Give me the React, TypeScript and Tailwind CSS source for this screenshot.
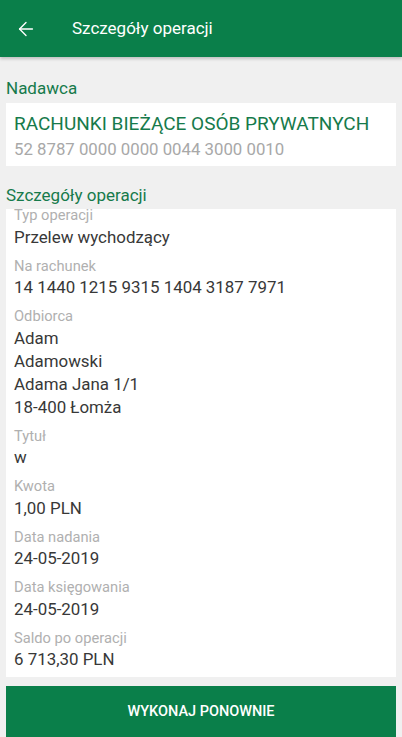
import { ArrowLeft } from "lucide-react";

const details = [
  { label: "Typ operacji", lines: ["Przelew wychodzący"] },
  { label: "Na rachunek", lines: ["14 1440 1215 9315 1404 3187 7971"] },
  { label: "Odbiorca", lines: ["Adam", "Adamowski", "Adama Jana 1/1", "18-400 Łomża"] },
  { label: "Tytuł", lines: ["w"] },
  { label: "Kwota", lines: ["1,00 PLN"] },
  { label: "Data nadania", lines: ["24-05-2019"] },
  { label: "Data księgowania", lines: ["24-05-2019"] },
  { label: "Saldo po operacji", lines: ["6 713,30 PLN"] },
];

export default function App() {
  return (
    <div
      className="w-[402px] h-[737px] bg-[#f0f0f0] flex flex-col overflow-hidden"
      style={{ fontFamily: "Roboto, 'Noto Sans', sans-serif" }}
    >
      {/* Toolbar */}
      <div className="h-[57px] shrink-0 bg-[#0a7f4a] flex items-center shadow-[0_2px_3px_rgba(0,0,0,0.2)] relative z-10">
        <ArrowLeft className="ml-[15px] w-[22px] h-[22px] text-white" strokeWidth={1.5} />
        <span className="ml-[35px] text-white text-[17px]">Szczegóły operacji</span>
      </div>

      <div className="px-[6px] flex-1 flex flex-col min-h-0">
        {/* Sender */}
        <div className="mt-[19px] h-[24px] leading-[24px] text-[#167a4b] text-[17px]">Nadawca</div>
        <div className="mt-[3px] bg-white px-[8px] pt-[9px] pb-[6px]">
          <div className="text-[#167a4b] text-[19px] leading-[24px]">
            RACHUNKI BIEŻĄCE OSÓB PRYWATNYCH
          </div>
          <div className="text-[#a8a8a8] text-[16.8px] leading-[22px] mt-[2px]">
            52 8787 0000 0000 0044 3000 0010
          </div>
        </div>

        {/* Operation details */}
        <div className="mt-[17px] h-[24px] leading-[24px] text-[#167a4b] text-[17px]">
          Szczegóły operacji
        </div>
        <div className="mt-[2px] flex-1 min-h-0 bg-white px-[8px] overflow-hidden">
          <div className="-mt-[3px] flex flex-col gap-[8px]">
            {details.map((d) => (
              <div key={d.label}>
                <div className="text-[#b0b0b0] text-[14.7px] leading-[19.5px]">{d.label}</div>
                {d.lines.map((l, i) => (
                  <div key={i} className="text-[#383838] text-[16.9px] leading-[23px]">
                    {l}
                  </div>
                ))}
              </div>
            ))}
          </div>
        </div>

        {/* Action */}
        <button className="mt-[9px] h-[51px] shrink-0 bg-[#0a7f4a] text-white text-[14.5px] font-medium">
          WYKONAJ PONOWNIE
        </button>
      </div>
    </div>
  );
}
